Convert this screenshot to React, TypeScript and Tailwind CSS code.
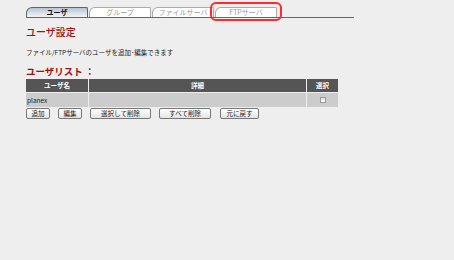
import React from 'react';

const tabs = ['ユーザ', 'グループ', 'ファイルサーバ', 'FTPサーバ'];
const buttons = [
  { label: '追加', w: 'w-[24px]', ml: '' },
  { label: '編集', w: 'w-[24px]', ml: 'ml-[8px]' },
  { label: '選択して削除', w: 'w-[61px]', ml: 'ml-[8px]' },
  { label: 'すべて削除', w: 'w-[52px]', ml: 'ml-[8px]' },
  { label: '元に戻す', w: 'w-[39px]', ml: 'ml-[9px]' },
];

export default function App() {
  return (
    <div
      className="w-[454px] h-[260px] bg-[#eeeeee] pl-[26px] pt-[7px] text-[#222]"
      style={{ fontFamily: '"Noto Sans CJK JP", "Liberation Sans", sans-serif' }}
    >
      {/* tab strip */}
      <div className="relative flex items-end w-[328px] h-[11px] border-b border-[#666]">
        {tabs.map((t, i) => (
          <div
            key={t}
            className={
              'w-[62px] h-[10px] mr-[1px] flex items-center justify-center text-[7px] leading-none rounded-tl-[6px] rounded-tr-[2px] border border-b-0 ' +
              (i === 0
                ? 'bg-gradient-to-b from-[#b9c6d3] to-[#f2f5f8] border-[#556677] font-bold text-[#111]'
                : 'bg-white border-[#aaaaaa] text-[#999]')
            }
          >
            {t}
          </div>
        ))}
        <div className="absolute left-[184px] top-[-5px] w-[72px] h-[19px] border-2 border-[#ff2a2a] rounded-[6px]" />
      </div>

      <div className="mt-[8px] text-[10px] leading-[11px] font-medium text-[#a01010]">ユーザ設定</div>
      <div className="mt-[11px] text-[6.5px] leading-[8px]">ファイル/FTPサーバのユーザを追加･編集できます</div>

      <div className="mt-[10px] text-[9.5px] leading-[10px] font-bold text-[#a01010]">ユーザリスト&nbsp;：</div>

      {/* table */}
      <div className="mt-[3px] w-[312px] text-[6.5px] leading-none">
        <div className="flex h-[13px] bg-[#555555] text-white font-bold">
          <div className="w-[63px] flex items-center justify-center border-r border-[#eeeeee]">ユーザ名</div>
          <div className="flex-1 flex items-center justify-center border-r border-[#eeeeee]">詳細</div>
          <div className="w-[31px] flex items-center justify-center">選択</div>
        </div>
        <div className="flex h-[14px] mt-[1px] bg-[#cccccc]">
          <div className="w-[63px] flex items-center pl-[1px] border-r border-[#eeeeee]">planex</div>
          <div className="flex-1 border-r border-[#eeeeee]" />
          <div className="w-[31px] flex items-center justify-center">
            <div className="w-[6px] h-[6px] border border-[#999] bg-gradient-to-b from-[#ddd] to-white" />
          </div>
        </div>
      </div>

      {/* buttons */}
      <div className="flex mt-[1px]">
        {buttons.map((b) => (
          <div
            key={b.label}
            className={
              b.w + ' ' + b.ml +
              ' h-[11px] flex items-center justify-center text-[6.5px] leading-none bg-gradient-to-b from-white to-[#e4e4e4] border border-[#777] rounded-[2px]'
            }
          >
            {b.label}
          </div>
        ))}
      </div>
    </div>
  );
}
